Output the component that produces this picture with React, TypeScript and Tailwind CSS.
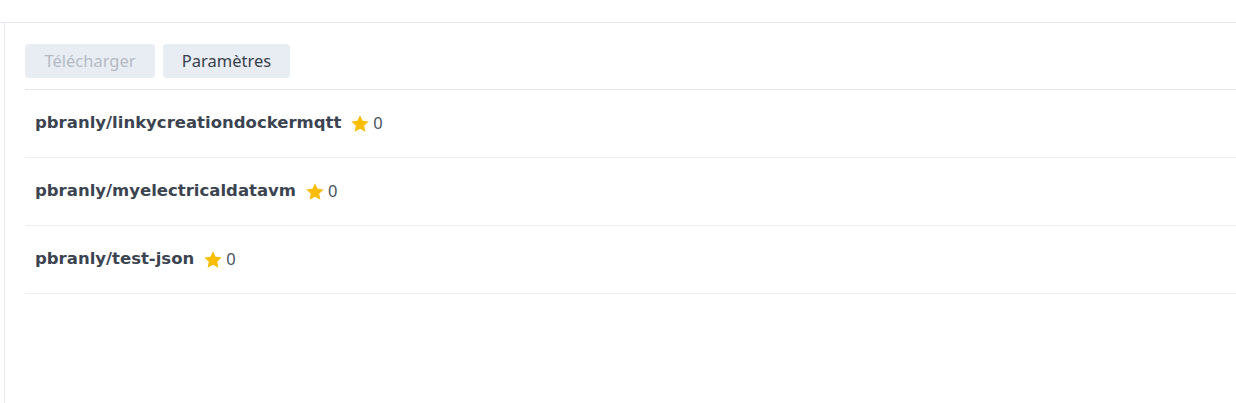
import React from "react";

const rows = [
  "pbranly/linkycreationdockermqtt",
  "pbranly/myelectricaldatavm",
  "pbranly/test-json",
];

function Star() {
  return (
    <svg width="20" height="20" viewBox="0 0 24 24" className="shrink-0">
      <path
        d="M12 1.5l3.1 6.7 7.3.85-5.4 5 1.45 7.25L12 17.7l-6.45 3.6L7 14.05l-5.4-5 7.3-.85L12 1.5z"
        fill="#fbbc04"
      />
    </svg>
  );
}

export default function App() {
  return (
    <div className="w-[1236px] h-[403px] bg-white overflow-hidden">
      <div className="h-[23px] border-b border-[#e6e9ed]" />
      <div className="ml-[4px] h-[380px] border-l border-[#e3e8ef] pl-[20px] pt-[21px]">
        <div className="flex gap-[8px]">
          <button
            className="h-[34px] w-[130px] flex items-center justify-center rounded-[4px] bg-[#e8edf4] text-[#b4bac3] text-[16.5px]"
            style={{ fontFamily: '"Noto Sans", "Open Sans", sans-serif' }}
          >
            Télécharger
          </button>
          <button
            className="h-[34px] w-[127px] flex items-center justify-center rounded-[4px] bg-[#e8edf4] text-[#37404a] text-[16.5px]"
            style={{ fontFamily: '"Noto Sans", "Open Sans", sans-serif' }}
          >
            Paramètres
          </button>
        </div>
        <div className="mt-[11px] border-t border-[#e3e6ea]">
          {rows.map((r) => (
            <div
              key={r}
              className="h-[68px] border-b border-[#eceef1] flex items-center pl-[10px]"
            >
              <span
                className="font-bold text-[16.5px] text-[#3b4450]"
                style={{ fontFamily: '"DejaVu Sans", Verdana, sans-serif' }}
              >
                {r}
              </span>
              <span className="ml-[9px] flex items-center gap-[3px]">
                <Star />
                <span
                  className="text-[16.5px] text-[#475360]"
                  style={{ fontFamily: '"Noto Sans", "Open Sans", sans-serif' }}
                >
                  0
                </span>
              </span>
            </div>
          ))}
        </div>
      </div>
    </div>
  );
}
